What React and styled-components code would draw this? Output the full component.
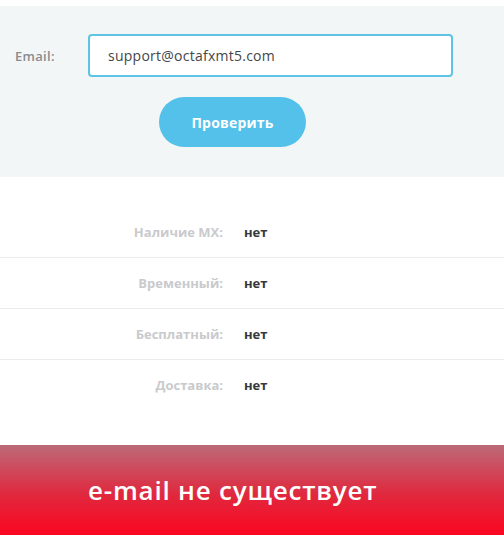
import React, { useState } from 'react';
import styled, { createGlobalStyle } from 'styled-components';

const GlobalStyle = createGlobalStyle`
  body {
    margin: 0;
    background: #ffffff;
    font-family: "Open Sans", "Noto Sans", sans-serif;
  }
`;

const Page = styled.div`
  padding-top: 6px;
  width: 504px;
`;

const FormSection = styled.section`
  background: #f3f6f7;
  height: 171px;
  box-sizing: border-box;
  padding-top: 28px;
`;

const FieldRow = styled.div`
  display: flex;
  align-items: center;
`;

const FieldLabel = styled.label`
  width: 88px;
  box-sizing: border-box;
  padding-left: 15px;
  font-size: 13px;
  font-weight: 600;
  letter-spacing: 0.3px;
  color: #8a8c8e;
`;

const Input = styled.input`
  width: 365px;
  height: 43px;
  box-sizing: border-box;
  border: 2px solid #5ec3e4;
  border-radius: 4px;
  background: #ffffff;
  padding: 0 18px;
  font-family: inherit;
  font-size: 14px;
  font-weight: 500;
  letter-spacing: 0.25px;
  color: #444649;
  outline: none;
`;

const CheckButton = styled.button`
  display: block;
  margin: 20px 0 0 159px;
  width: 147px;
  height: 50px;
  border: none;
  border-radius: 25px;
  background: #53c1ea;
  color: #ffffff;
  font-family: inherit;
  font-size: 14px;
  font-weight: 700;
  letter-spacing: 0.2px;
  cursor: pointer;
`;

const Results = styled.section`
  padding: 30px 0 35px;
`;

const ResultRow = styled.div`
  display: flex;
  align-items: center;
  gap: 21px;
  height: 50px;
  border-bottom: ${p => (p.$last ? 'none' : '1px solid #ebebeb')};
  font-size: 13px;
  font-weight: 700;
`;

const ResultLabel = styled.span`
  width: 223px;
  text-align: right;
  color: #c9cacc;
`;

const ResultValue = styled.span`
  color: #36383b;
`;

const Banner = styled.div`
  height: 90px;
  display: flex;
  align-items: center;
  padding-left: 88px;
  background: linear-gradient(to bottom, #bc6a78 0%, #e0283e 55%, #fb0620 100%);
  color: #ffffff;
  font-size: 26px;
  font-weight: 600;
  letter-spacing: 0.8px;
`;

const rows = [
  ['Наличие MX:', 'нет'],
  ['Временный:', 'нет'],
  ['Бесплатный:', 'нет'],
  ['Доставка:', 'нет'],
];

export default function App() {
  const [email, setEmail] = useState('support@octafxmt5.com');

  return (
    <Page>
      <GlobalStyle />
      <FormSection>
        <FieldRow>
          <FieldLabel>Email:</FieldLabel>
          <Input value={email} onChange={e => setEmail(e.target.value)} />
        </FieldRow>
        <CheckButton type="button">Проверить</CheckButton>
      </FormSection>
      <Results>
        {rows.map(([label, value], i) => (
          <ResultRow key={label} $last={i === rows.length - 1}>
            <ResultLabel>{label}</ResultLabel>
            <ResultValue>{value}</ResultValue>
          </ResultRow>
        ))}
      </Results>
      <Banner>e-mail не существует</Banner>
    </Page>
  );
}
